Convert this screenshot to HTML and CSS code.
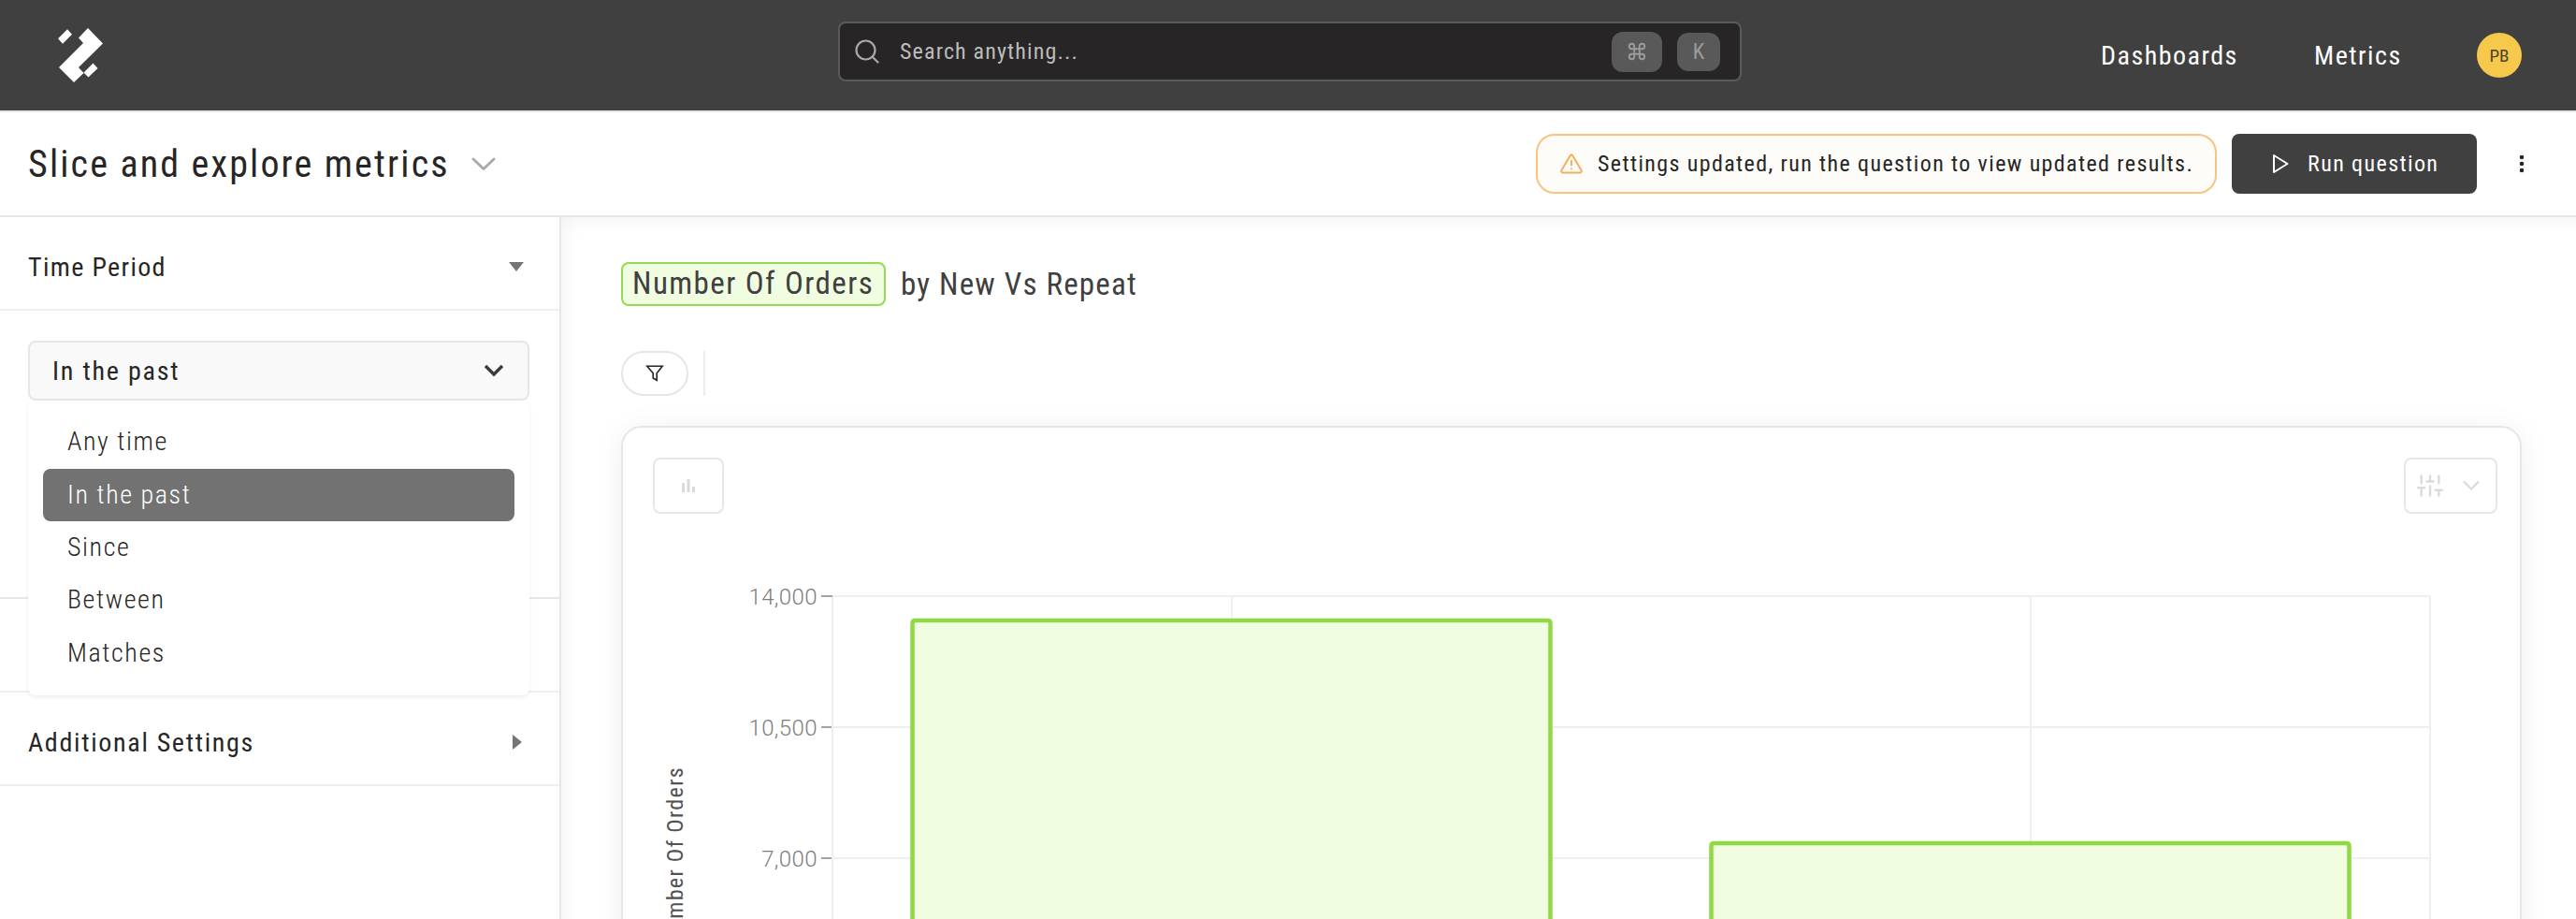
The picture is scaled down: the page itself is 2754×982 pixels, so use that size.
FILE: index.html
```html
<!DOCTYPE html>
<html lang="en">
<head>
<meta charset="utf-8">
<title>Slice and explore metrics</title>
<link rel="stylesheet" href="styles.css">
</head>
<body>
<header class="topbar">
  <svg class="logo" viewBox="0 0 48 58" fill="#fff"><path d="M10 1.300 15 6.700 5 16.700 0 11.300ZM32 0 48 16.500 22 42 27.500 48 17 58 1 42 27 16 22 10.500ZM37.500 37.500 42.500 43 32.500 52.500 27.500 47.500Z"/></svg>
  <div class="search">
    <svg class="search-icon" viewBox="0 0 26 26" fill="none" stroke="#a9a9a9" stroke-width="2.200" stroke-linecap="round"><circle cx="11.500" cy="11.500" r="10"/><path d="m19 19 5.500 5.500"/></svg>
    <span class="search-text">Search anything...</span>
    <kbd class="key key-cmd"><svg width="22" height="22" viewBox="0 0 24 24" fill="none" stroke="#9c9c9c" stroke-width="2"><path d="M18 3a3 3 0 0 0-3 3v12a3 3 0 1 0 3-3H6a3 3 0 1 0 3 3V6a3 3 0 1 0-3 3h12a3 3 0 1 0 0-6z"/></svg></kbd>
    <kbd class="key key-k">K</kbd>
  </div>
  <nav class="nav">
    <a class="link link-dash">Dashboards</a>
    <a class="link link-metrics">Metrics</a>
    <span class="avatar">PB</span>
  </nav>
</header>
<div class="toolbar">
  <h1 class="title">Slice and explore metrics</h1>
  <svg class="title-chevron" viewBox="0 0 26 14" fill="none" stroke="#a8a8a8" stroke-width="2.800" stroke-linecap="round" stroke-linejoin="round"><path d="m2 2 11 10.500L24 2"/></svg>
  <div class="alert">
    <svg class="alert-icon" viewBox="0 0 24 22" fill="none" stroke="#f7ae5c" stroke-width="2" stroke-linecap="round" stroke-linejoin="round"><path d="M10.500 2.500 1.400 18a1.700 1.700 0 0 0 1.500 2.500h18.200a1.700 1.700 0 0 0 1.500-2.500L13.500 2.500a1.700 1.700 0 0 0-3 0Z"/><path d="M12 8v4.500M12 16.200v.3"/></svg>
    <span class="alert-text">Settings updated, run the question to view updated results.</span>
  </div>
  <button class="run">
    <svg class="run-icon" viewBox="0 0 18 22" fill="none" stroke="#fff" stroke-width="2" stroke-linejoin="round"><path d="M2 2v18l14.500-9Z"/></svg>
    <span>Run question</span>
  </button>
  <svg class="more" viewBox="0 0 6 20" fill="#262626"><circle cx="3" cy="3" r="2.300"/><circle cx="3" cy="10" r="2.300"/><circle cx="3" cy="17" r="2.300"/></svg>
</div>
<div class="body">
  <aside class="sidebar">
    <div class="section"><span class="section-name name-time">Time Period</span><svg width="16" height="10"><path d="M0 0h16L8 10Z" fill="#757575"/></svg></div>
    <div class="panel">
      <div class="select">
        <span class="select-value">In the past</span>
        <svg width="22" height="14" viewBox="0 0 22 14" fill="none" stroke="#3d3d3d" stroke-width="3.400"><path d="m2 2 9 9 9-9"/></svg>
        <ul class="menu">
          <li class="item">Any time</li>
          <li class="item selected">In the past</li>
          <li class="item">Since</li>
          <li class="item">Between</li>
          <li class="item">Matches</li>
        </ul>
      </div>
    </div>
    <div class="section"></div>
    <div class="section"><span class="section-name name-add">Additional Settings</span><svg class="tri-right" width="10" height="16"><path d="M0 0v16l10-8Z" fill="#757575"/></svg></div>
  </aside>
  <main class="main">
    <div class="question"><span class="chip">Number Of Orders</span><span class="by">by New Vs Repeat</span></div>
    <div class="filters">
      <button class="filter"><svg width="20" height="20" viewBox="0 0 20 20" fill="none" stroke="#262626" stroke-width="1.600"><path d="M1.800 2.300h16.400l-6 7.500v7.500l-4-2.300V9.800Z"/></svg></button>
      <span class="divider"></span>
    </div>
    <section class="card">
      <div class="card-head">
        <button class="ghost ghost-chart"><svg width="14" height="14" fill="#dadada"><path d="M0 4h3v10H0ZM5.500 0h3v14h-3ZM11 8h3v6h-3Z"/></svg></button>
        <button class="ghost ghost-tune"><svg width="28" height="24" viewBox="0 0 28 24" fill="none" stroke="#dadada" stroke-width="2.400" stroke-linecap="round"><path d="M4.700 1.500v8M4.700 14.500v8M1.200 14.300h7M14 1.500v5M10.500 7.500h7M14 12.500v10M23.300 1.500v8M23.300 17.500v5M19.800 16.700h7"/></svg><svg width="18" height="12" viewBox="0 0 18 12" fill="none" stroke="#dadada" stroke-width="2.200" stroke-linecap="round"><path d="m1.500 2 7.500 7.500L16.500 2"/></svg></button>
      </div>
      <svg class="chart" width="2028" height="433" viewBox="666 549 2028 433">
        <g stroke="#efefef" stroke-width="2"><path d="M889 637H2599M890 777H2598M890 917H2598M890 637V982M1317 637V982M2171 637V982M2598 637V982"/></g>
        <path d="M878 637h12M878 777h11M878 917h11" stroke="#a3a3a3" stroke-width="2"/>
        <g class="tick" text-anchor="end"><text x="874" y="646">14,000</text><text x="874" y="786">10,500</text><text x="874" y="926">7,000</text></g>
        <g fill="#f0fde0" stroke="#8fd944" stroke-width="4.500"><path d="M975.500 982V666q0-3 3-3h676q3 0 3 3v316"/><path d="M1829.500 982v-78q0-3 3-3h676q3 0 3 3v78"/></g>
        <text class="axis" text-anchor="end" transform="translate(730 819) rotate(-90)">Number Of Orders</text>
      </svg>
    </section>
  </main>
</div>
</body>
</html>
```
FILE: styles.css
```css
* { box-sizing: border-box; }
html { overflow: hidden; }
body { margin: 0; width: 2754px; height: 982px; overflow: hidden; background: #fff; color: #262626; font-family: Roboto, "Liberation Sans", sans-serif; font-stretch: 87.5%; display: flex; flex-direction: column; }
h1, ul { margin: 0; padding: 0; font-weight: 400; list-style: none; }
button { font: inherit; margin: 0; padding: 0; background: none; border: 0; }
svg { display: block; flex: none; }
span, h1, a, li { white-space: nowrap; }

.topbar { height: 120px; flex: none; background: #404040; border-bottom: 2px solid #e6e6e6; display: flex; align-items: center; padding: 0 58px 0 62px; }
.logo { width: 48px; height: 58px; }
.search { margin: -8px 0 0 786px; width: 966px; height: 64px; background: #272526; border: 2px solid #5a5a5a; border-radius: 8px; display: flex; align-items: center; padding: 0 21px 0 16px; }
.search-icon { width: 26px; height: 26px; }
.search-text { margin-left: 22px; color: #bcbcbc; font-size: 24px; letter-spacing: 1.150px; }
.key { background: #595959; color: #9c9c9c; border-radius: 12px; display: flex; align-items: center; justify-content: center; font-family: inherit; font-size: 23px; }
.key-cmd { width: 54px; height: 43px; margin-left: auto; }
.key-k { width: 46px; height: 41px; margin-left: 16px; }
.nav { margin-left: auto; display: flex; align-items: center; }
.link { color: #fff; font-size: 28px; letter-spacing: 1.500px; }
.link-dash { width: 228px; }
.link-metrics { width: 174px; }
.avatar { width: 48px; height: 48px; border-radius: 50%; background: #f6c84b; color: #4a4332; font-size: 19px; display: flex; align-items: center; justify-content: center; }

.toolbar { height: 112px; flex: none; border-bottom: 2px solid #e6e6e6; display: flex; align-items: center; padding: 0 55px 0 30px; }
.title { width: 474px; font-size: 40px; letter-spacing: 2.150px; }
.title-chevron { width: 26px; height: 14px; }
.alert { margin-left: auto; width: 728px; height: 64px; border: 2px solid #fac382; border-radius: 20px; background: #fefcf8; display: flex; align-items: center; padding-left: 24px; }
.alert-icon { width: 24px; height: 22px; }
.alert-text { margin-left: 16px; font-size: 24px; letter-spacing: 1.380px; }
.run { margin-left: 16px; width: 262px; height: 64px; border-radius: 8px; background: #404040; color: #fff; display: flex; align-items: center; padding-left: 43px; font-size: 24px; letter-spacing: 1.400px; }
.run-icon { width: 18px; height: 22px; margin-right: 20px; }
.more { width: 6px; height: 20px; margin-left: 45px; }

.body { flex: 1; min-height: 0; display: flex; overflow: hidden; }
.sidebar { width: 600px; flex: none; border-right: 2px solid #e6e6e6; }
.section { height: 100px; border-bottom: 2px solid #efefef; display: flex; align-items: center; justify-content: space-between; padding: 8px 38px 0 30px; }
.section-name { font-size: 28px; letter-spacing: 1.350px; }
.name-add { letter-spacing: 1.700px; }
.tri-right { margin-right: 2px; }
.panel { height: 308px; border-bottom: 2px solid #e6e6e6; padding: 32px 32px 0 30px; }
.select { position: relative; height: 64px; border: 2px solid #e6e6e6; border-radius: 8px; background: #f9f9f9; display: flex; align-items: center; justify-content: space-between; padding: 0 25px 0 24px; }
.select-value { font-size: 28px; letter-spacing: 1.800px; }
.menu { position: absolute; left: -2px; top: 62px; width: 536px; height: 315px; padding: 16px; background: #fff; border-radius: 8px; box-shadow: 0 2px 4px rgba(0,0,0,.07); }
.item { height: 56.600px; line-height: 56px; padding-left: 26px; border-radius: 8px; font-size: 28px; font-weight: 300; letter-spacing: 1.600px; }
.selected { background: #727272; color: #fff; height: 56px; }

.main { flex: 1; min-width: 0; padding: 48px 58px 0 64px; box-shadow: inset 12px 12px 18px -8px rgba(0,0,0,.05); }
.question { display: flex; align-items: center; height: 47px; font-size: 33px; color: #404040; }
.chip { width: 283px; height: 47px; line-height: 42px; padding-left: 10px; border: 2px solid #93db4f; border-radius: 8px; background: #f0fde0; letter-spacing: 1.450px; }
.by { margin-left: 16px; letter-spacing: 1.200px; }
.filters { display: flex; gap: 16px; margin-top: 48px; height: 48px; }
.filter { width: 72px; border: 2px solid #e6e6e6; border-radius: 24px; display: flex; align-items: center; justify-content: center; }
.divider { width: 2px; background: #ececec; }
.card { margin-top: 32px; height: 560px; border: 2px solid #e6e6e6; border-radius: 22px; background: #fff; box-shadow: 0 4px 32px rgba(0,0,0,.07); }
.card-head { display: flex; justify-content: space-between; padding: 32px 24px 0 32px; }
.ghost { height: 60px; border: 2px solid #e6e6e6; border-radius: 8px; display: flex; align-items: center; }
.ghost-chart { width: 76px; justify-content: center; }
.ghost-tune { width: 100px; padding-left: 12px; gap: 21px; }
.tick { font-size: 24px; font-weight: 300; font-stretch: 100%; fill: #7d7d7d; letter-spacing: 0.400px; }
.axis { font-size: 24px; fill: #525252; letter-spacing: 1.300px; }
```
